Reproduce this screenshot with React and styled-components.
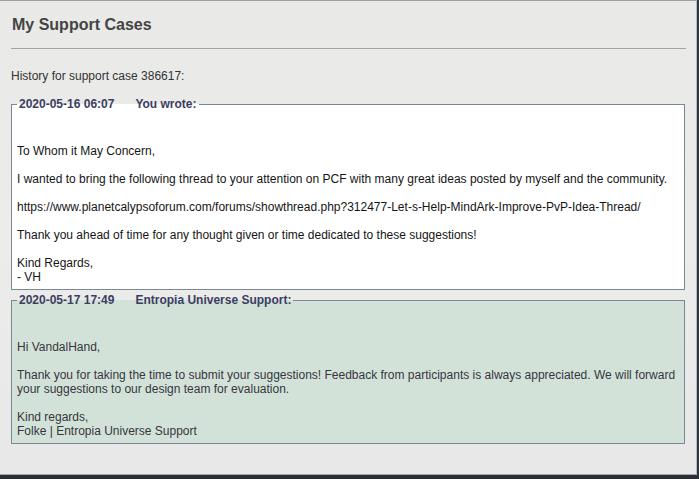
import React from "react";
import styled, { createGlobalStyle } from "styled-components";

const Global = createGlobalStyle`
  html, body { margin: 0; padding: 0; background: #2c3238; }
  body { font-family: "Liberation Sans", Arial, sans-serif; }
`;

const Frame = styled.div`
  width: 699px;
  height: 479px;
  box-sizing: border-box;
  display: flex;
  flex-direction: column;
  border-right: 2px solid #2d343b;
  border-bottom: 4px solid #2b3036;
  background: #2c3238;
`;

const Panel = styled.div`
  flex: 1;
  box-sizing: border-box;
  border-top: 1px solid #9ba1a7;
  border-right: 1px solid #b9bcbf;
  border-bottom: 1px solid #a3a6a9;
  background: linear-gradient(180deg, #e9e9e8 0%, #ececeb 50%, #e8e8e8 100%);
  padding: 0 11px 0 11px;
  display: flex;
  flex-direction: column;
`;

const Title = styled.h1`
  margin: 15px 0 0 1px;
  font-size: 16px;
  line-height: 18px;
  font-weight: bold;
  color: #444;
`;

const Rule = styled.hr`
  margin: 14px 0 0 0;
  border: 0;
  height: 1px;
  background: #a3a3a3;
  width: 675px;
`;

const Intro = styled.div`
  margin-top: 20px;
  font-size: 12px;
  line-height: 14px;
  color: #333;
`;

const Box = styled.fieldset`
  margin: ${(p) => (p.$first ? "14px" : "3px")} 0 0 0;
  width: 674px;
  box-sizing: border-box;
  padding: 0 5px 5px 5px;
  border: 1px solid #7a8794;
  background: ${(p) => p.$bg};
  min-inline-size: 0;
`;

const Legend = styled.legend`
  padding: 0 2px;
  font-size: 12px;
  line-height: 14px;
  font-weight: bold;
  color: #3b3e63;
`;

const Stamp = styled.span`
  margin-right: 21px;
`;

const Body = styled.div`
  padding-top: 33px;
  font-size: 12px;
  line-height: 14px;
  color: ${(p) => p.$color};
`;

const Para = styled.p`
  margin: 0 0 14px 0;
  &:last-child { margin-bottom: 0; }
`;

const entries = [
  {
    date: "2020-05-16 06:07",
    who: "You wrote:",
    bg: "#ffffff",
    color: "#151515",
    paras: [
      ["To Whom it May Concern,"],
      ["I wanted to bring the following thread to your attention on PCF with many great ideas posted by myself and the community."],
      ["https://www.planetcalypsoforum.com/forums/showthread.php?312477-Let-s-Help-MindArk-Improve-PvP-Idea-Thread/"],
      ["Thank you ahead of time for any thought given or time dedicated to these suggestions!"],
      ["Kind Regards,", "- VH"],
    ],
  },
  {
    date: "2020-05-17 17:49",
    who: "Entropia Universe Support:",
    bg: "#d3e2d8",
    color: "#363640",
    paras: [
      ["Hi VandalHand,"],
      ["Thank you for taking the time to submit your suggestions! Feedback from participants is always appreciated. We will forward your suggestions to our design team for evaluation."],
      ["Kind regards,", "Folke | Entropia Universe Support"],
    ],
  },
];

export default function App() {
  return (
    <>
      <Global />
      <Frame>
        <Panel>
          <Title>My Support Cases</Title>
          <Rule />
          <Intro>History for support case 386617:</Intro>
          {entries.map((e, i) => (
            <Box key={i} $first={i === 0} $bg={e.bg}>
              <Legend>
                <Stamp>{e.date}</Stamp>
                {e.who}
              </Legend>
              <Body $color={e.color}>
                {e.paras.map((lines, j) => (
                  <Para key={j}>
                    {lines.map((l, k) => (
                      <React.Fragment key={k}>
                        {k > 0 && <br />}
                        {l}
                      </React.Fragment>
                    ))}
                  </Para>
                ))}
              </Body>
            </Box>
          ))}
        </Panel>
      </Frame>
    </>
  );
}
